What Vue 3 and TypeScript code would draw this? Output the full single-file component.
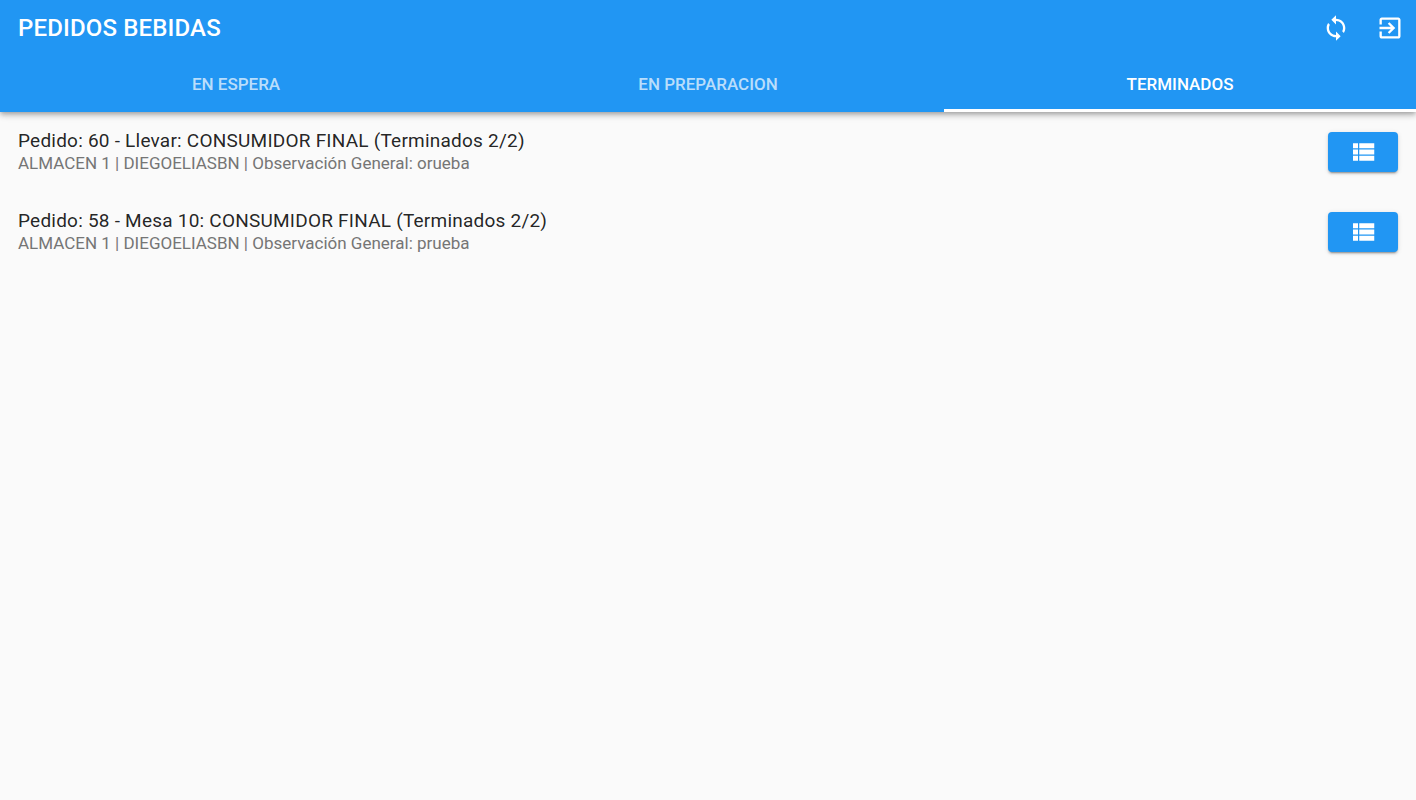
<template>
  <div class="page">
    <header class="appbar">
      <div class="toolbar">
        <div class="title">PEDIDOS BEBIDAS</div>
        <div class="actions">
          <button class="icon-btn" aria-label="Actualizar">
            <svg viewBox="0 0 24 24" width="28" height="28"><path d="M12 4V1L8 5l4 4V6c3.31 0 6 2.69 6 6 0 1.01-.25 1.97-.7 2.8l1.46 1.46C19.54 15.03 20 13.57 20 12c0-4.42-3.58-8-8-8zm0 14c-3.31 0-6-2.69-6-6 0-1.01.25-1.97.7-2.8L5.24 7.74C4.46 8.97 4 10.43 4 12c0 4.42 3.58 8 8 8v3l4-4-4-4v3z" /></svg>
          </button>
          <button class="icon-btn" aria-label="Salir">
            <svg viewBox="0 0 24 24" width="28" height="28"><path d="M10.09 15.59L11.5 17l5-5-5-5-1.41 1.41L12.67 11H3v2h9.67l-2.58 2.59zM19 3H5c-1.11 0-2 .9-2 2v4h2V5h14v14H5v-4H3v4c0 1.1.89 2 2 2h14c1.1 0 2-.9 2-2V5c0-1.1-.9-2-2-2z" /></svg>
          </button>
        </div>
      </div>
      <nav class="tabs">
        <div v-for="tab in tabs" :key="tab" class="tab" :class="{ active: tab === activeTab }">{{ tab }}</div>
      </nav>
    </header>

    <main class="list">
      <div v-for="order in orders" :key="order.title" class="row">
        <div class="info">
          <div class="row-title">{{ order.title }}</div>
          <div class="row-sub">{{ order.subtitle }}</div>
        </div>
        <button class="list-btn" aria-label="Ver detalle">
          <svg viewBox="0 0 24 24" width="30" height="30"><path d="M4 14h4v-4H4v4zm0 5h4v-4H4v4zM4 9h4V5H4v4zm5 5h12v-4H9v4zm0 5h12v-4H9v4zM9 5v4h12V5H9z" /></svg>
        </button>
      </div>
    </main>
  </div>
</template>

<script setup lang="ts">
const tabs = ['EN ESPERA', 'EN PREPARACION', 'TERMINADOS']
const activeTab = 'TERMINADOS'

const orders = [
  {
    title: 'Pedido: 60 - Llevar: CONSUMIDOR FINAL (Terminados 2/2)',
    subtitle: 'ALMACEN 1 | DIEGOELIASBN | Observación General: orueba',
  },
  {
    title: 'Pedido: 58 - Mesa 10: CONSUMIDOR FINAL (Terminados 2/2)',
    subtitle: 'ALMACEN 1 | DIEGOELIASBN | Observación General: prueba',
  },
]
</script>

<style>
html,
body {
  margin: 0;
  height: 100%;
  background: #fafafa;
}
</style>

<style scoped>
.page {
  height: 800px;
  overflow: hidden;
  background: #fafafa;
  font-family: Roboto, 'Liberation Sans', sans-serif;
}

.appbar {
  height: 112px;
  background: #2196f3;
  color: #fff;
  box-shadow: 0 2px 4px -1px rgba(0, 0, 0, 0.2), 0 4px 5px rgba(0, 0, 0, 0.14), 0 1px 10px rgba(0, 0, 0, 0.12);
  position: relative;
}

.toolbar {
  height: 56px;
  display: flex;
  align-items: center;
  justify-content: space-between;
  padding-left: 18px;
}

.title {
  font-size: 24px;
  font-weight: 500;
  letter-spacing: 0.15px;
}

.actions {
  display: flex;
}

.icon-btn {
  width: 53px;
  height: 56px;
  display: flex;
  align-items: center;
  justify-content: center;
  padding: 0;
  border: none;
  background: none;
  fill: #fff;
}

.icon-btn:first-child {
  padding-right: 1px;
}

.tabs {
  height: 56px;
  display: grid;
  grid-template-columns: repeat(3, 1fr);
}

.tab {
  display: flex;
  align-items: center;
  justify-content: center;
  font-size: 17px;
  font-weight: 500;
  color: rgba(255, 255, 255, 0.7);
  border-bottom: 3px solid transparent;
  padding-top: 3px;
  box-sizing: border-box;
}

.tab.active {
  color: #fff;
  border-bottom-color: #fff;
}

.row {
  height: 80px;
  display: flex;
  align-items: center;
  justify-content: space-between;
  padding: 0 18px;
}

.row-title {
  font-size: 19px;
  letter-spacing: 0.225px;
  line-height: 22px;
  color: rgba(0, 0, 0, 0.87);
}

.row-sub {
  font-size: 17px;
  line-height: 22px;
  color: #757575;
}

.list-btn {
  width: 70px;
  height: 40px;
  display: flex;
  align-items: center;
  justify-content: center;
  padding: 0 1px 0 0;
  border: none;
  border-radius: 4px;
  background: #2196f3;
  fill: #fff;
  box-shadow: 0 3px 1px -2px rgba(0, 0, 0, 0.2), 0 2px 2px rgba(0, 0, 0, 0.14), 0 1px 5px rgba(0, 0, 0, 0.12);
}
</style>
